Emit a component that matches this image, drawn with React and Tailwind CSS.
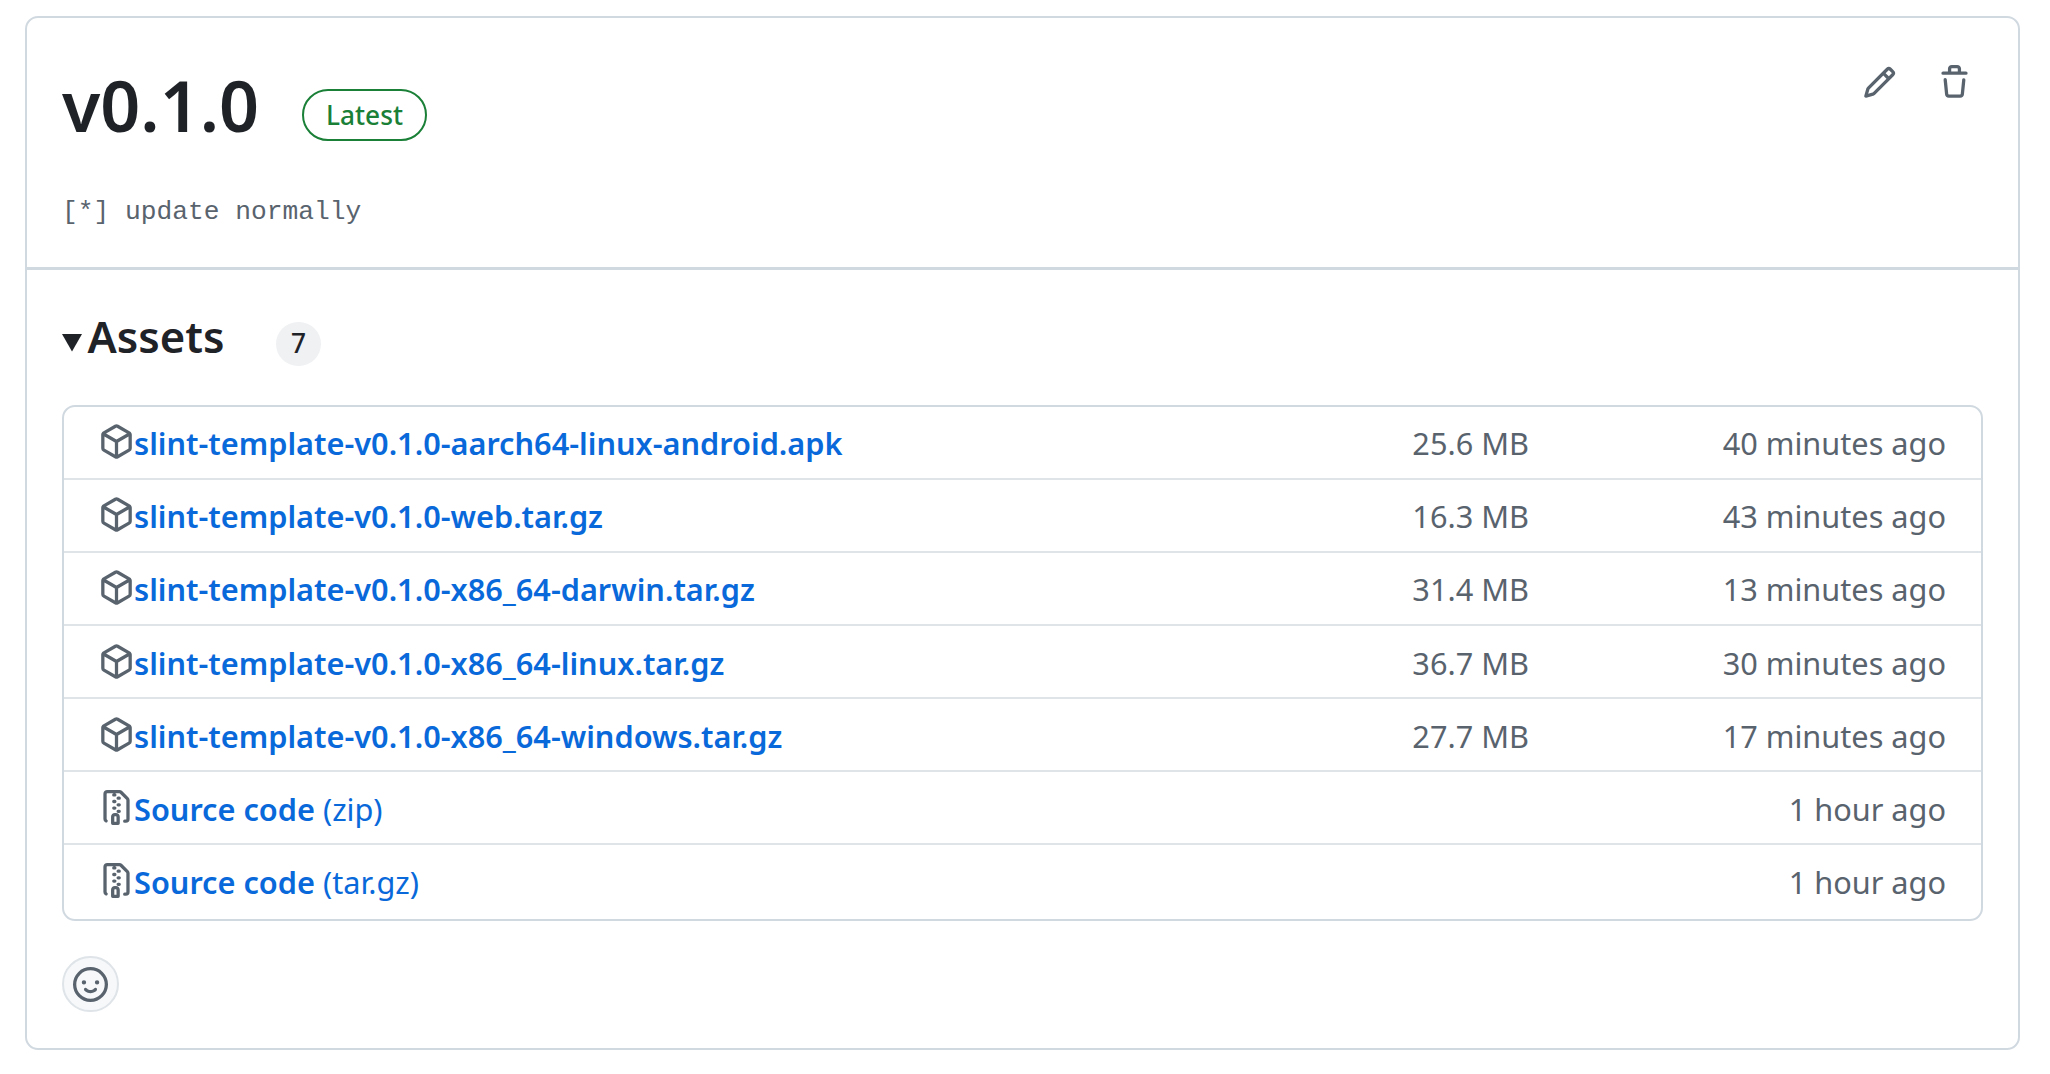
const ICONS = {
  pencil:
    "M11.013 1.427a1.75 1.75 0 0 1 2.474 0l1.086 1.086a1.75 1.75 0 0 1 0 2.474l-8.61 8.61c-.21.21-.47.364-.756.445l-3.251.93a.75.75 0 0 1-.927-.928l.929-3.25c.081-.286.235-.547.445-.758l8.61-8.61Zm.176 4.823L9.75 4.81l-6.286 6.287a.253.253 0 0 0-.064.108l-.558 1.953 1.953-.558a.253.253 0 0 0 .108-.064Zm1.238-3.763a.25.25 0 0 0-.354 0L10.811 3.75l1.439 1.44 1.263-1.263a.25.25 0 0 0 0-.354Z",
  trash:
    "M11 1.75V3h2.25a.75.75 0 0 1 0 1.5H2.75a.75.75 0 0 1 0-1.5H5V1.75C5 .784 5.784 0 6.75 0h2.5C10.216 0 11 .784 11 1.75ZM4.496 6.675l.66 6.6a.25.25 0 0 0 .249.225h5.19a.25.25 0 0 0 .249-.225l.66-6.6a.75.75 0 0 1 1.492.149l-.66 6.6A1.748 1.748 0 0 1 10.595 15h-5.19a1.75 1.75 0 0 1-1.741-1.575l-.66-6.6a.75.75 0 1 1 1.492-.15ZM6.5 1.75V3h3V1.75a.25.25 0 0 0-.25-.25h-2.5a.25.25 0 0 0-.25.25Z",
  box:
    "m8.878.392 5.25 3.045c.54.314.872.89.872 1.514v6.098a1.75 1.75 0 0 1-.872 1.514l-5.25 3.045a1.75 1.75 0 0 1-1.756 0l-5.25-3.045A1.75 1.75 0 0 1 1 11.049V4.951c0-.624.332-1.201.872-1.514L7.122.392a1.75 1.75 0 0 1 1.756 0ZM7.875 1.69l-4.63 2.685L8 7.133l4.755-2.758-4.63-2.685a.248.248 0 0 0-.25 0ZM2.5 5.677v5.372c0 .09.047.171.125.216l4.625 2.683V8.432Zm6.25 8.271 4.625-2.683a.25.25 0 0 0 .125-.216V5.677L8.75 8.432Z",
  zip:
    "M3.5 1.75v11.5c0 .09.048.173.126.217a.75.75 0 0 1-.752 1.298A1.748 1.748 0 0 1 2 13.25V1.75C2 .784 2.784 0 3.75 0h5.586c.464 0 .909.185 1.237.513l2.914 2.914c.329.328.513.773.513 1.237v8.586A1.75 1.75 0 0 1 12.25 15h-.5a.75.75 0 0 1 0-1.5h.5a.25.25 0 0 0 .25-.25V4.664a.25.25 0 0 0-.073-.177L9.513 1.573a.25.25 0 0 0-.177-.073H7.25a.75.75 0 0 1 0 1.5h-.5a.75.75 0 0 1 0-1.5h-3a.25.25 0 0 0-.25.25Zm3.75 8.75h.5c.966 0 1.75.784 1.75 1.75v3a.75.75 0 0 1-.75.75h-2.5a.75.75 0 0 1-.75-.75v-3c0-.966.784-1.75 1.75-1.75ZM6 5.25a.75.75 0 0 1 .75-.75h.5a.75.75 0 0 1 0 1.5h-.5A.75.75 0 0 1 6 5.25Zm.75 2.25h.5a.75.75 0 0 1 0 1.5h-.5a.75.75 0 0 1 0-1.5ZM8 6.75A.75.75 0 0 1 8.75 6h.5a.75.75 0 0 1 0 1.5h-.5A.75.75 0 0 1 8 6.75ZM8.75 3h.5a.75.75 0 0 1 0 1.5h-.5a.75.75 0 0 1 0-1.5ZM8 9.75A.75.75 0 0 1 8.75 9h.5a.75.75 0 0 1 0 1.5h-.5A.75.75 0 0 1 8 9.75Zm-1 2.5v2.25h1v-2.25a.25.25 0 0 0-.25-.25h-.5a.25.25 0 0 0-.25.25Z",
  smiley:
    "M8 0a8 8 0 1 1 0 16A8 8 0 0 1 8 0ZM1.5 8a6.5 6.5 0 1 0 13 0 6.5 6.5 0 0 0-13 0Zm3.82 1.636a.75.75 0 0 1 1.038.175l.007.009c.103.118.22.222.35.31.264.178.683.37 1.285.37.602 0 1.02-.192 1.285-.371.13-.088.247-.192.35-.31l.007-.008a.75.75 0 0 1 1.222.87l-.022-.015c.02.013.021.015.021.015v.001l-.001.002-.002.003-.005.007-.014.019a2.066 2.066 0 0 1-.184.213c-.16.166-.338.316-.53.445-.63.418-1.37.638-2.127.629-.946 0-1.652-.308-2.126-.63a3.331 3.331 0 0 1-.715-.657l-.014-.02-.005-.006-.002-.003v-.002h-.001l.613-.432-.614.43a.75.75 0 0 1 .183-1.044ZM12 7a1 1 0 1 1-2 0 1 1 0 0 1 2 0ZM5 8a1 1 0 1 1 0-2 1 1 0 0 1 0 2Z",
};

function Icon({ name, className = "" }) {
  return (
    <svg viewBox="0 0 16 16" fill="currentColor" aria-hidden="true" className={`size-[35px] shrink-0 ${className}`}>
      <path d={ICONS[name]} />
    </svg>
  );
}

const ASSETS = [
  { icon: "box", name: "slint-template-v0.1.0-aarch64-linux-android.apk", size: "25.6 MB", time: "40 minutes ago" },
  { icon: "box", name: "slint-template-v0.1.0-web.tar.gz", size: "16.3 MB", time: "43 minutes ago" },
  { icon: "box", name: "slint-template-v0.1.0-x86_64-darwin.tar.gz", size: "31.4 MB", time: "13 minutes ago" },
  { icon: "box", name: "slint-template-v0.1.0-x86_64-linux.tar.gz", size: "36.7 MB", time: "30 minutes ago" },
  { icon: "box", name: "slint-template-v0.1.0-x86_64-windows.tar.gz", size: "27.7 MB", time: "17 minutes ago" },
  { icon: "zip", name: "Source code", kind: "(zip)", time: "1 hour ago" },
  { icon: "zip", name: "Source code", kind: "(tar.gz)", time: "1 hour ago" },
];

function AssetRow({ asset }) {
  return (
    <li className="flex h-[73px] items-start border-b-2 border-[#dfe4e9] px-[35px] pt-[15px] text-[30.69px] leading-[42px] text-[#59636e] last:border-b-0 nth-[n+4]:pt-4">
      <Icon name={asset.icon} className="mt-[2px]" />
      <a className="flex-1 whitespace-pre text-[#0969da]">
        <span className="font-semibold">{asset.name}</span>
        {asset.kind && <span> {asset.kind}</span>}
      </a>
      <span className="text-right">{asset.size}</span>
      <span className="w-[417px] text-right">{asset.time}</span>
    </li>
  );
}

export default function App() {
  return (
    <div className="h-[1074px] w-[2050px] overflow-hidden bg-white pt-4 pl-[25px] font-['Noto_Sans',sans-serif] text-[#1f2328]">
      <article className="h-[1034px] w-[1995px] rounded-[13px] border-2 border-[#d1d9e0]">
        <header className="flex h-[252px] items-start justify-between border-b-[3px] border-[#d1d9e0] pt-[39px] pr-[46px] pl-[35px]">
          <div>
            <div className="flex items-start">
              <h1 className="w-[240px] text-[70px] leading-[96px] font-semibold">v0.1.0</h1>
              <span className="mt-8 h-[52px] w-[125px] rounded-full border-2 border-[#1a7f37] text-center text-[26.25px] leading-[48px] font-medium text-[#1a7f37]">
                Latest
              </span>
            </div>
            <pre className="mt-11 font-['Liberation_Mono',monospace] text-[26.25px] leading-[30px] text-[#59636e]">
              [*] update normally
            </pre>
          </div>
          <div className="flex gap-10 pt-2 text-[#59636e]">
            <Icon name="pencil" />
            <Icon name="trash" />
          </div>
        </header>

        <section className="pt-9 pr-[35px] pl-[35px]">
          <div className="flex h-[60px] items-start">
            <svg viewBox="0 0 20 18" className="mt-7 h-[18px] w-5 fill-[#1f2328]" aria-hidden="true">
              <path d="M0 0H20L10 17.5Z" />
            </svg>
            <h2 className="ml-[5.5px] w-[188.5px] text-[43.6px] leading-[60px] font-semibold">Assets</h2>
            <span className="mt-4 h-[44px] w-[45px] rounded-full bg-[#eff1f3] text-center text-[26.25px] leading-[42px] font-medium">
              7
            </span>
          </div>

          <ul className="mt-[39px] h-[516px] rounded-[13px] border-2 border-[#d1d9e0]">
            {ASSETS.map((asset, i) => (
              <AssetRow key={i} asset={asset} />
            ))}
          </ul>

          <button className="mt-[35px] flex h-14 w-[57px] items-center justify-center rounded-full border-2 border-[#dfe4e9] bg-[#f6f8fa] text-[#59636e]">
            <Icon name="smiley" />
          </button>
        </section>
      </article>
    </div>
  );
}
